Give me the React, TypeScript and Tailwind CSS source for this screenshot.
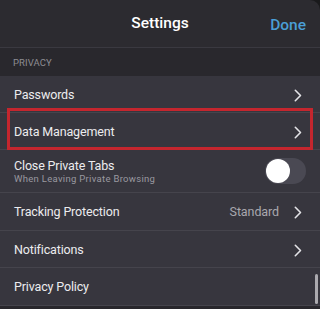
import React from "react";

const Chevron = () => (
  <svg width="8" height="13" viewBox="0 0 8 13" fill="none">
    <path d="M1.3 1.3L6.5 6.5L1.3 11.7" stroke="#e4e4e8" strokeWidth="1.6" strokeLinecap="round" strokeLinejoin="round" />
  </svg>
);

const Row = ({ children, h = "h-[37px]", border = true }: { children: React.ReactNode; h?: string; border?: boolean }) => (
  <div className={`${h} flex items-center pl-[14px] pr-[18px] pt-[2px] ${border ? "border-b border-[#45444c]" : ""}`}>{children}</div>
);

const label = "text-[12.5px] text-[#ececee] tracking-[-0.15px] flex-1";

export default function App() {
  return (
    <div className="w-[320px] h-[309px] bg-[#1a1a1c] overflow-hidden relative" style={{ fontFamily: "Roboto, 'Noto Sans', sans-serif" }}>
      <div className="rounded-tr-[10px] bg-[#2c2b30] h-full flex flex-col">
        <div className="h-[48px] relative flex items-center justify-center border-b border-[#3a3940]">
          <span className="text-[15.5px] font-medium text-white">Settings</span>
          <span className="absolute right-[14px] top-[14px] text-[15.5px] font-medium text-[#4a9ed6]">Done</span>
        </div>
        <div className="h-[28px] flex items-end pb-[6px] pl-[13px] bg-[#29282d]">
          <span className="text-[9.5px] text-[#8e8d93] tracking-[0.1px]">PRIVACY</span>
        </div>
        <div className="bg-[#37363e] relative">
          <Row>
            <span className={label}>Passwords</span>
            <Chevron />
          </Row>
          <Row>
            <span className={label}>Data Management</span>
            <Chevron />
          </Row>
          <Row h="h-[43px]">
            <div className="flex-1 flex flex-col -mt-[1px]">
              <span className="text-[12.5px] text-[#ececee] tracking-[-0.15px] leading-[15px]">Close Private Tabs</span>
              <span className="text-[9.5px] text-[#9a99a0] tracking-[0.3px] leading-[12px]">When Leaving Private Browsing</span>
            </div>
            <div className="w-[41px] h-[26px] rounded-full bg-[#4a4953] relative -mr-[4px] -mt-[2px]">
              <div className="absolute left-[1px] top-[1px] w-[24px] h-[24px] rounded-full bg-white" />
            </div>
          </Row>
          <Row h="h-[38px]">
            <span className={label}>Tracking Protection</span>
            <span className="text-[12.5px] text-[#a9a8ae] tracking-[-0.1px] mr-[15px]">Standard</span>
            <Chevron />
          </Row>
          <Row>
            <span className={label}>Notifications</span>
            <Chevron />
          </Row>
          <Row h="h-[38px]">
            <span className={label}>Privacy Policy</span>
          </Row>
          <div className="absolute right-[2px] bottom-[2px] w-[3px] h-[30px] rounded-full bg-[#c8c8cc]/80" />
          <div className="absolute left-[7px] right-[7px] top-[32px] h-[42px] border-[3px] border-[#c4262e]" />
        </div>
        <div className="flex-1 bg-[#28272c]" />
      </div>
    </div>
  );
}
